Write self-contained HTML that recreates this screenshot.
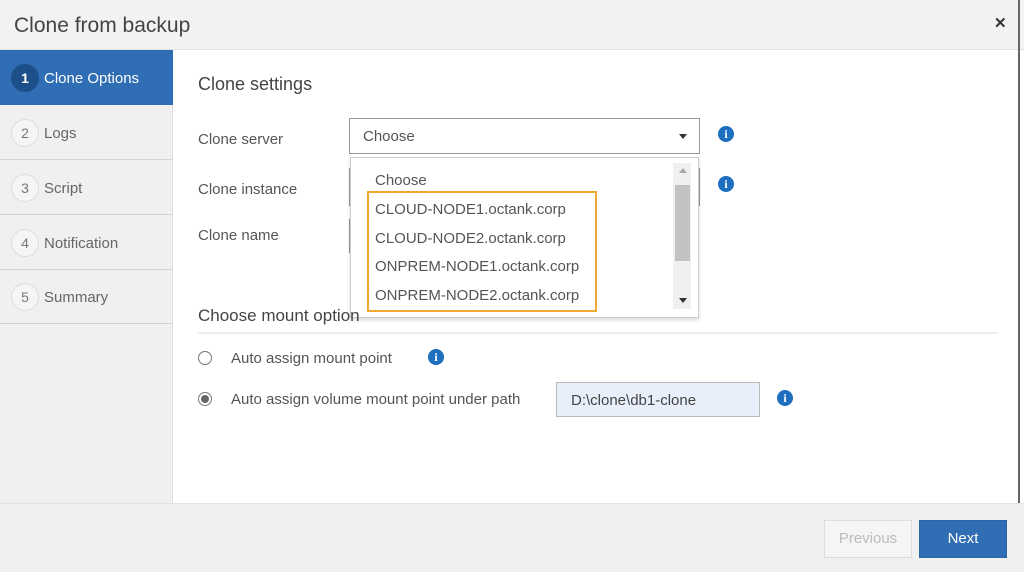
<!DOCTYPE html>
<html><head><meta charset="utf-8"><style>
*{box-sizing:border-box;margin:0;padding:0}
body{width:1024px;height:572px;overflow:hidden;background:#fff;font-family:"Liberation Sans",sans-serif;color:#555;position:relative}
.abs{position:absolute}
.hdr{left:0;top:0;width:1024px;height:50px;background:#f2f2f2;border-bottom:1px solid #e2e2e2}
.hdr .t{left:14px;top:14px;font-size:21px;color:#444}
.x{left:994px;top:14px;font-size:15px;font-weight:bold;color:#333}
.side{left:0;top:50px;width:173px;height:453px;background:#f0f0f0;border-right:1px solid #ddd}
.item{position:absolute;left:0;width:173px;height:55px;border-bottom:1px solid #d5d5d5;font-size:15px;color:#666}
.item .n{position:absolute;left:11px;top:14px;width:28px;height:28px;border-radius:50%;border:1px solid #ddd;background:#f5f5f5;text-align:center;line-height:26px;font-size:14px;color:#777}
.item .l{position:absolute;left:44px;top:20px}
.act{background:#2f6db5;color:#fff;border-bottom:none}
.act .n{background:#1d4f8a;border-color:#1d4f8a;color:#fff;font-weight:bold}
.main{font-size:15px;color:#555}
.info{position:absolute;width:16px;height:16px;border-radius:50%;background:#1f6fc0;color:#fff;font:bold 12px/16px "Liberation Serif",serif;text-align:center}
.foot{left:0;top:503px;width:1024px;height:69px;background:#f0f0f0;border-top:1px solid #e2e2e2}
.btn{position:absolute;top:520px;height:38px;font-size:15px;text-align:center;line-height:36px}
.dd div{position:absolute;left:24px;font-size:15px;color:#555}
</style></head><body>
<div class="abs hdr"><div class="abs t">Clone from backup</div></div>
<div class="abs x">✕</div>
<div class="abs" style="left:1018px;top:0;width:2px;height:572px;background:#666"></div>
<div class="abs side">
 <div class="item act" style="top:0"><div class="n">1</div><div class="l">Clone Options</div></div>
 <div class="item" style="top:55px"><div class="n">2</div><div class="l">Logs</div></div>
 <div class="item" style="top:110px"><div class="n">3</div><div class="l">Script</div></div>
 <div class="item" style="top:165px"><div class="n">4</div><div class="l">Notification</div></div>
 <div class="item" style="top:219px"><div class="n">5</div><div class="l">Summary</div></div>
</div>
<div class="main">
 <div class="abs" style="left:198px;top:74px;font-size:18px;color:#444">Clone settings</div>
 <div class="abs" style="left:198px;top:131px">Clone server</div>
 <div class="abs" style="left:198px;top:181px">Clone instance</div>
 <div class="abs" style="left:198px;top:227px">Clone name</div>
 <div class="abs" style="left:349px;top:118px;width:351px;height:36px;border:1px solid #999;background:#fff"><div class="abs" style="left:13px;top:9px;color:#555">Choose</div><div class="abs" style="right:12px;top:15px;border-left:4px solid transparent;border-right:4px solid transparent;border-top:5px solid #333"></div></div>
 <div class="info" style="left:718px;top:126px">i</div>
 <div class="info" style="left:718px;top:176px">i</div>
 <div class="abs" style="left:349px;top:168px;width:2px;height:38px;background:#999"></div>
 <div class="abs" style="left:698px;top:168px;width:2px;height:38px;background:#999"></div>
 <div class="abs" style="left:349px;top:219px;width:2px;height:34px;background:#999"></div>
 <div class="abs dd" style="left:350px;top:157px;width:349px;height:161px;background:#fff;border:1px solid #ccc;box-shadow:0 2px 4px rgba(0,0,0,.15)">
  <div style="top:14px">Choose</div>
  <div style="top:43px">CLOUD-NODE1.octank.corp</div>
  <div style="top:72px">CLOUD-NODE2.octank.corp</div>
  <div style="top:100px">ONPREM-NODE1.octank.corp</div>
  <div style="top:129px">ONPREM-NODE2.octank.corp</div>
  <div style="left:16px;top:33px;width:230px;height:121px;border:2px solid #f0a830"></div>
  <div style="left:322px;top:5px;width:18px;height:146px;background:#f0f0f0"></div>
  <div style="left:328px;top:10px;width:0;height:0;border-left:4px solid transparent;border-right:4px solid transparent;border-bottom:5px solid #aaa"></div>
  <div style="left:324px;top:27px;width:15px;height:76px;background:#c2c2c2"></div>
  <div style="left:328px;top:140px;width:0;height:0;border-left:4px solid transparent;border-right:4px solid transparent;border-top:5px solid #333"></div>
 </div>
 <div class="abs" style="left:198px;top:306px;font-size:17px;color:#444">Choose mount option</div>
 <div class="abs" style="left:198px;top:332px;width:800px;height:2px;background:#eee"></div>
 <div class="abs" style="left:198px;top:351px;width:14px;height:14px;border-radius:50%;border:1px solid #777"></div>
 <div class="abs" style="left:231px;top:350px">Auto assign mount point</div>
 <div class="info" style="left:428px;top:349px">i</div>
 <div class="abs" style="left:198px;top:392px;width:14px;height:14px;border-radius:50%;border:1px solid #777"><div class="abs" style="left:2px;top:2px;width:8px;height:8px;border-radius:50%;background:#666"></div></div>
 <div class="abs" style="left:231px;top:391px">Auto assign volume mount point under path</div>
 <div class="abs" style="left:556px;top:382px;width:204px;height:35px;background:#e8effa;border:1px solid #bbb"><div class="abs" style="left:14px;top:9px;color:#444">D:\clone\db1-clone</div></div>
 <div class="info" style="left:777px;top:390px">i</div>
</div>
<div class="abs foot"></div>
<div class="btn" style="left:824px;width:88px;border:1px solid #ddd;background:#f5f5f5;color:#bbb">Previous</div>
<div class="btn" style="left:919px;width:88px;background:#2f6db5;color:#fff;border:1px solid #2a65a8">Next</div>
</body></html>
